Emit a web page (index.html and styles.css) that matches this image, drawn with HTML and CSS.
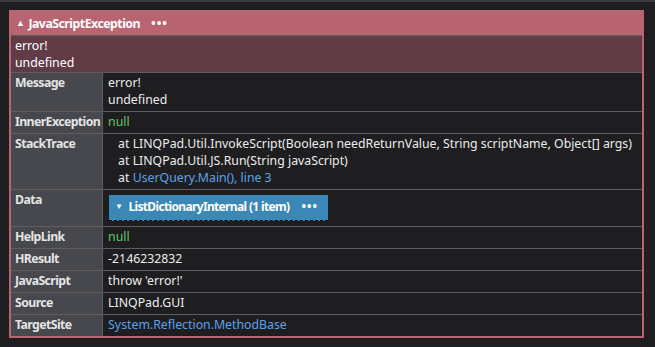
FILE: index.html
```html
<!DOCTYPE html>
<html lang="en">
<head>
    <meta charset="UTF-8">
    <title>JavaScriptException</title>
    <link rel="stylesheet" href="styles.css">
</head>
<body>
    <div class="results">
        <table class="dump">
            <tr>
                <th class="type-head" colspan="2"><span class="arrow">&#9650;</span>JavaScriptException<span class="dots">&bull;&bull;&bull;</span></th>
            </tr>
            <tr>
                <td class="summary" colspan="2">error!<br>undefined</td>
            </tr>
            <tr>
                <th>Message</th>
                <td>error!<br>undefined</td>
            </tr>
            <tr>
                <th>InnerException</th>
                <td class="null">null</td>
            </tr>
            <tr>
                <th>StackTrace</th>
                <td class="stack">
                    <div>at LINQPad.Util.InvokeScript(Boolean needReturnValue, String scriptName, Object[] args)</div>
                    <div>at LINQPad.Util.JS.Run(String javaScript)</div>
                    <div>at <span class="link">UserQuery.Main(), line 3</span></div>
                </td>
            </tr>
            <tr>
                <th>Data</th>
                <td class="data-cell">
                    <span class="collapsed"><span class="down">&#9660;</span>ListDictionaryInternal (1 item)<span class="dots">&bull;&bull;&bull;</span></span>
                </td>
            </tr>
            <tr>
                <th>HelpLink</th>
                <td class="null">null</td>
            </tr>
            <tr>
                <th>HResult</th>
                <td>-2146232832</td>
            </tr>
            <tr>
                <th>JavaScript</th>
                <td>throw 'error!'</td>
            </tr>
            <tr>
                <th>Source</th>
                <td>LINQPad.GUI</td>
            </tr>
            <tr>
                <th>TargetSite</th>
                <td class="link">System.Reflection.MethodBase</td>
            </tr>
        </table>
    </div>
</body>
</html>
```

FILE: styles.css
```css
body {
    margin: 0;
    background-color: #1e1e20;
    border-top: 2px solid #3b3b42;
    font-family: "Noto Sans", "Open Sans", sans-serif;
    font-size: 12.3px;
    color: #ececec;
}

.results {
    padding: 8px 9px;
}

.dump {
    width: 635px;
    border-collapse: collapse;
    border: 2px solid #b96471;
}

.dump th,
.dump td {
    border: 1px solid #5e5e62;
    padding: 1px 4px 3px 4px;
    line-height: 17px;
    vertical-align: top;
    text-align: left;
    white-space: nowrap;
}

.dump td {
    padding-left: 5px;
}

.dump th {
    background-color: #46484e;
    color: #e4e4e4;
    width: 84px;
    padding-right: 2px;
    font-weight: bold;
    letter-spacing: -0.6px;
}

.dump th.type-head {
    background-color: #b96471;
    color: #ffffff;
    border: none;
    padding: 3px 5px 2px 5px;
    letter-spacing: -0.5px;
}

.arrow {
    font-size: 9px;
    margin-right: 4px;
    position: relative;
    top: -2px;
}

.dots {
    letter-spacing: 1px;
    margin-left: 11px;
}

.dump td.summary {
    background-color: #613c47;
    color: #ffffff;
    padding: 1px 4px 1px 4px;
}

.null {
    color: #62c462;
}

.link {
    color: #5aa2ea;
}

.stack div {
    padding-left: 10px;
}

.dump td.data-cell {
    padding-top: 5px;
    padding-bottom: 5px;
}

.collapsed {
    display: inline-block;
    margin-left: 1px;
    background-color: #3a87b8;
    color: #ffffff;
    font-size: 12px;
    font-weight: bold;
    letter-spacing: -0.65px;
    padding: 3px 10px 4px 6px;
    border-bottom: 1px dashed #000000;
}

.collapsed .dots {
    margin-left: 12px;
}

.collapsed .down {
    font-size: 8px;
    margin-right: 6px;
    position: relative;
    top: -2px;
}
```
